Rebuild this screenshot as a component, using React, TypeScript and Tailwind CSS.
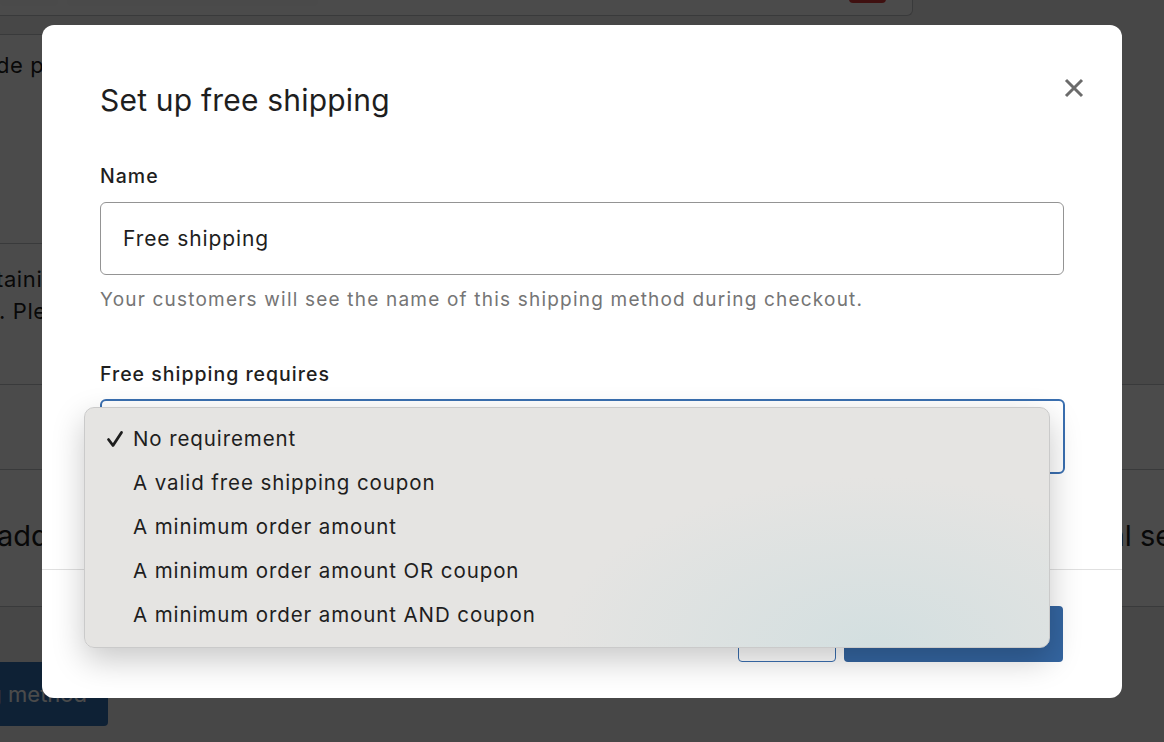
const options = [
  'No requirement',
  'A valid free shipping coupon',
  'A minimum order amount',
  'A minimum order amount OR coupon',
  'A minimum order amount AND coupon',
];

function Check() {
  return (
    <svg width="18" height="18" viewBox="0 0 18 18" className="shrink-0">
      <path d="M2.5 9.5 L7 15.5 L15.5 2.5" fill="none" stroke="#1e1e1e" strokeWidth="2.8" strokeLinecap="round" strokeLinejoin="round" />
    </svg>
  );
}

function CloseIcon() {
  return (
    <svg width="20" height="20" viewBox="0 0 20 20">
      <path d="M2 2 L18 18 M18 2 L2 18" stroke="#6b6b6b" strokeWidth="3" />
    </svg>
  );
}

function Page() {
  return (
    <div className="flex flex-col w-[1164px] h-[742px] bg-[#f0f0f1] text-[#1e1e1e]">
      <div className="w-[913px] h-[17px] bg-white border-b border-r border-[#c3c4c7] rounded-br-md flex items-start gap-[9px] -mt-[1px]">
        <div className="w-[58px] h-[7px] bg-[#fafafa] rounded-b-sm" />
        <div className="w-[251px] h-[7px] bg-[#fafafa] rounded-b-sm" />
        <div className="ml-auto mr-[26px] w-[37px] h-[4px] bg-[#d63638] rounded-b-sm" />
      </div>
      <div className="mt-[18px] w-[1000px] h-[210px] border-t border-b border-[#c3c4c7] bg-white">
        <div className="pt-[14px] -ml-[4px] text-[22px] tracking-[0.6px]">de products from free shipping</div>
      </div>
      <div className="h-[140px] bg-white flex flex-col pt-[19px] text-[22px] leading-[32px] w-[1000px] tracking-[0.6px]">
        <div className="-ml-[4px]">taining items in this zone.</div>
        <div className="-ml-[1px]">. Please choose a method.</div>
      </div>
      <div className="h-[86px] border-t border-b border-[#c3c4c7] bg-white" />
      <div className="h-[137px] border-b border-[#c3c4c7] bg-white flex items-center text-[29px] pb-[4px] whitespace-nowrap">
        <span className="shrink-0 -ml-[3px] w-[998px]">add a shipping method</span>
        <span className="shrink-0">Additional settings</span>
      </div>
      <div className="mt-[55px] w-[108px] h-[64px] bg-[#3271b4] rounded-r-[4px] text-white text-[22px] flex items-center justify-end pr-[21px] overflow-hidden whitespace-nowrap">
        <span className="shrink-0">Add shipping method</span>
      </div>
    </div>
  );
}

export default function App() {
  return (
    <div className="relative w-[1164px] h-[742px] overflow-hidden font-['Inter','Liberation_Sans',sans-serif]">
      <Page />
      <div className="absolute inset-0 bg-black/[0.705]" />

      <div className="absolute left-[42px] top-[25px] w-[1080px] h-[673px] bg-white rounded-[12px] flex flex-col text-[#1e1e1e]">
        <div className="px-[58px] pb-[95px]">
          <div className="flex items-start justify-between pt-[53px]">
            <h2 className="mt-[4px] text-[30px] leading-[36px] font-normal tracking-[0.2px]">Set up free shipping</h2>
            <button className="-mr-[20px] w-[20px] h-[20px] flex items-center justify-center">
              <CloseIcon />
            </button>
          </div>

          <label className="block mt-[46px] text-[19.5px] leading-[24px] font-medium tracking-[1px]">Name</label>
          <div className="mt-[14px] h-[73px] border border-[#949494] rounded-[6px] flex items-center px-[22px] text-[21px] tracking-[0.9px]">
            Free shipping
          </div>
          <p className="mt-[13px] text-[19px] leading-[24px] text-[#757575] tracking-[1.2px]">
            Your customers will see the name of this shipping method during checkout.
          </p>

          <label className="block mt-[50px] text-[19.5px] leading-[24px] font-medium tracking-[1px]">Free shipping requires</label>
          <div className="mt-[13px] h-[75px] w-[965px] border-2 border-[#3a6fb0] rounded-[6px] flex items-center px-[22px] text-[21px] tracking-[0.9px]">
            No requirement
          </div>
        </div>

        <div className="border-t border-[#e0e0e0] flex justify-end gap-[8px] px-[59px] pt-[36px] pb-[36px]">
          <button className="w-[98px] h-[56px] border border-[#3a6fb0] rounded-[4px] bg-white text-[#3a6fb0] text-[19px]">Cancel</button>
          <button className="w-[219px] h-[56px] rounded-[4px] bg-[#3465a0] text-white text-[19px]">Create</button>
        </div>

        <div className="absolute left-[42px] top-[382px] w-[966px] h-[241px] rounded-[10px] border border-[#cacaca] bg-[radial-gradient(ellipse_320px_170px_at_82%_100%,#d3dfe0,#e5e4e2)] shadow-[0_12px_32px_rgba(0,0,0,0.22)] pt-[9px] pb-[11px]">
          {options.map((o, i) => (
            <div key={o} className="h-[44px] flex items-center text-[20.5px] text-[#1e1e1e] tracking-[0.9px]">
              <div className="w-[48px] flex justify-end pr-[9px]">{i === 0 ? <Check /> : null}</div>
              <span>{o}</span>
            </div>
          ))}
        </div>
      </div>
    </div>
  );
}
